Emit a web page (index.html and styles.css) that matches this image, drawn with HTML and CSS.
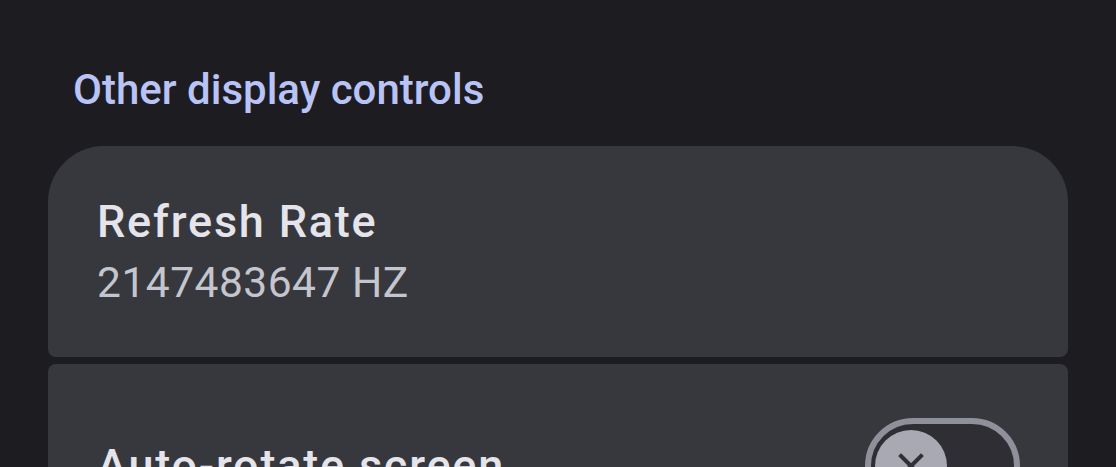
FILE: index.html
```html
<!DOCTYPE html>
<html>
<head>
<meta charset="utf-8">
<link rel="stylesheet" href="styles.css">
</head>
<body>
<div class="page">
  <h2 class="section-title">Other display controls</h2>
  <div class="card card-first">
    <div class="item-title">Refresh Rate</div>
    <div class="item-summary">2147483647 HZ</div>
  </div>
  <div class="card card-next">
    <div class="row">
      <div class="item-title">Auto-rotate screen</div>
      <div class="switch">
        <div class="thumb">
          <svg viewBox="0 0 24 24" width="40" height="40"><path d="M6 6 L18 18 M18 6 L6 18" stroke="#303038" stroke-width="2.4" stroke-linecap="square" fill="none"/></svg>
        </div>
      </div>
    </div>
  </div>
</div>
</body>
</html>
```
FILE: styles.css
```css
html, body {
  margin: 0;
  padding: 0;
  background: #1d1d21;
  overflow: hidden;
}
.page {
  padding: 0 48px;
  font-family: Roboto, "Noto Sans", sans-serif;
}
.section-title {
  margin: 0;
  padding: 64px 0 0 25px;
  height: 146px;
  box-sizing: border-box;
  font-size: 42px;
  font-weight: 500;
  line-height: 52px;
  color: #bac3f5;
}
.card {
  background: #37383e;
  box-sizing: border-box;
  padding: 0 48px 0 49px;
}
.card-first {
  border-radius: 56px 56px 8px 8px;
  height: 211px;
  padding-top: 50px;
}
.card-next {
  margin-top: 7px;
  border-radius: 8px 8px 0 0;
  height: 200px;
  padding-top: 54px;
}
.item-title {
  font-size: 45px;
  font-weight: 500;
  line-height: 52px;
  letter-spacing: 1.8px;
  color: #e4e4ea;
}
.item-summary {
  margin-top: 9px;
  font-size: 42.5px;
  font-weight: 400;
  line-height: 52px;
  color: #c5c6cd;
  letter-spacing: 0.5px;
}
.row {
  display: flex;
  align-items: center;
  justify-content: space-between;
}
.switch {
  width: 155px;
  height: 96px;
  box-sizing: border-box;
  border: 6px solid #8f9099;
  border-radius: 48px;
  background: #2f2e35;
  display: flex;
  align-items: center;
  padding-left: 4px;
}
.thumb {
  width: 72px;
  height: 72px;
  border-radius: 50%;
  background: #a8a9b2;
  display: flex;
  align-items: center;
  justify-content: center;
}
```
